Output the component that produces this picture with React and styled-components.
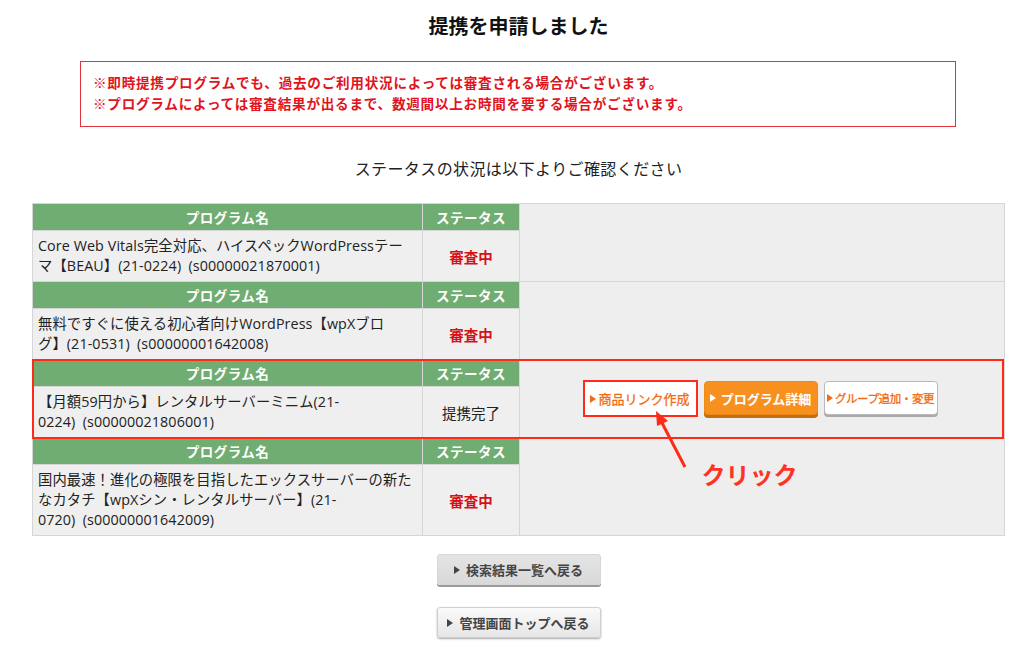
import React from "react"
import styled, { createGlobalStyle, css } from "styled-components"

const GlobalStyle = createGlobalStyle`
  body {
    margin: 0;
    background: #fff;
    font-family: "Liberation Sans", "Noto Sans CJK JP", sans-serif;
    color: #222;
  }
`

// name lines are split where the original table wraps them
const programs = [
  {
    name: ["Core Web Vitals完全対応、ハイスペックWordPressテー", "マ【BEAU】(21-0224)\u2002(s00000021870001)"],
    status: "審査中",
    pending: true,
  },
  {
    name: ["無料ですぐに使える初心者向けWordPress【wpXブロ", "グ】(21-0531)\u2002(s00000001642008)"],
    status: "審査中",
    pending: true,
  },
  {
    name: ["【月額59円から】レンタルサーバーミニム(21-", "0224)\u2002(s00000021806001)"],
    status: "提携完了",
    pending: false,
    active: true,
  },
  {
    name: [
      "国内最速！進化の極限を目指したエックスサーバーの新た",
      "なカタチ【wpXシン・レンタルサーバー】(21-",
      "0720)\u2002(s00000001642009)",
    ],
    status: "審査中",
    pending: true,
  },
]

const App = () => {
  return (
    <Page>
      <GlobalStyle />
      <Title>提携を申請しました</Title>
      <Notice>
        <p>※即時提携プログラムでも、過去のご利用状況によっては審査される場合がございます。</p>
        <p>※プログラムによっては審査結果が出るまで、数週間以上お時間を要する場合がございます。</p>
      </Notice>
      <Lead>ステータスの状況は以下よりご確認ください</Lead>

      <ProgramTable>
        {programs.map((p, i) => (
          <ProgramBlock key={i} $highlight={p.active}>
            <HeadCell>プログラム名</HeadCell>
            <HeadCell>ステータス</HeadCell>
            <ActionCell>
              {p.active && (
                <ButtonRow>
                  <LinkWrap>
                    <SmallButton $marked>商品リンク作成</SmallButton>
                    <Arrow width="40" height="62" viewBox="0 0 40 62">
                      <line x1="32" y1="59" x2="8" y2="13" stroke="#ff2a17" strokeWidth="3" />
                      <polygon points="3,3 15,13 4,18" fill="#ff2a17" />
                    </Arrow>
                    <CalloutText>クリック</CalloutText>
                  </LinkWrap>
                  <SmallButton $variant="orange">プログラム詳細</SmallButton>
                  <SmallButton $narrow>グループ追加・変更</SmallButton>
                </ButtonRow>
              )}
            </ActionCell>
            <NameCell>
              {p.name.map((line, j) => (
                <span key={j}>{line}</span>
              ))}
            </NameCell>
            <StatusCell $pending={p.pending}>{p.status}</StatusCell>
          </ProgramBlock>
        ))}
      </ProgramTable>

      <BackButtons>
        <BackButton>検索結果一覧へ戻る</BackButton>
        <BackButton $light>管理画面トップへ戻る</BackButton>
      </BackButtons>
    </Page>
  )
}

const Page = styled.div`
  width: 973px;
  margin-left: 32px;
  padding-bottom: 16px;
`

const Title = styled.h1`
  margin: 0;
  padding-top: 13px;
  text-align: center;
  font-size: 20px;
  line-height: 28px;
  font-weight: 700;
  color: #111;
`

const Notice = styled.div`
  margin: 20px 0 0 48px;
  width: 876px;
  height: 66px;
  border: 1px solid #e2333d;
  padding: 11px 12px 0;
  box-sizing: border-box;

  p {
    margin: 0;
    color: #e0141c;
    font-size: 13.6px;
    line-height: 21px;
    font-weight: 700;
    letter-spacing: 0.75px;
    white-space: nowrap;
  }
`

const Lead = styled.p`
  margin: 31px 0 0;
  text-align: center;
  font-size: 16px;
  line-height: 24px;
  letter-spacing: 0.4px;
  color: #222;
`

const ProgramTable = styled.div`
  margin-top: 21px;
  border: 1px solid #d6d6d6;
  border-bottom: none;
`

const ProgramBlock = styled.div`
  position: relative;
  display: grid;
  grid-template-columns: 390px 97px 1fr;
  grid-template-rows: 27px auto;

  ${({ $highlight }) =>
    $highlight &&
    css`
      z-index: 1;
      &::after {
        content: "";
        position: absolute;
        left: -1px;
        top: -1px;
        right: 0px;
        bottom: -1px;
        border: 2px solid #ff2a17;
        pointer-events: none;
      }
    `}
`

const HeadCell = styled.div`
  background: #6fad72;
  color: #fff;
  font-weight: 700;
  font-size: 13.5px;
  letter-spacing: 0.5px;
  display: flex;
  align-items: center;
  justify-content: center;
  border-right: 1px solid #d6d6d6;
  border-bottom: 1px solid #d6d6d6;
`

const ActionCell = styled.div`
  grid-column: 3;
  grid-row: 1 / span 2;
  background: #eeeeee;
  border-bottom: 1px solid #d6d6d6;
  display: flex;
  align-items: center;
  justify-content: center;
`

const NameCell = styled.div`
  grid-column: 1;
  grid-row: 2;
  display: flex;
  flex-direction: column;
  background: #efefef;
  padding: 5px 6px 5px 5px;
  font-family: "Open Sans", "Noto Sans CJK JP", sans-serif;
  font-size: 14.3px;
  line-height: 20px;
  letter-spacing: 0.1px;
  color: #222;
  white-space: nowrap;
  border-right: 1px solid #d6d6d6;
  border-bottom: 1px solid #d6d6d6;
`

const StatusCell = styled.div`
  grid-column: 2;
  grid-row: 2;
  background: #efefef;
  display: flex;
  align-items: center;
  justify-content: center;
  font-size: 14.5px;
  border-right: 1px solid #d6d6d6;
  border-bottom: 1px solid #d6d6d6;
  color: ${({ $pending }) => ($pending ? "#d4121a" : "#222")};
  font-weight: ${({ $pending }) => ($pending ? 700 : 400)};
`

const ButtonRow = styled.div`
  display: flex;
  gap: 6px;
  margin-left: -4px;
  margin-top: 1px;
`

const LinkWrap = styled.div`
  position: relative;
`

const SmallButton = styled.div`
  position: relative;
  box-sizing: border-box;
  width: 114px;
  height: 34px;
  border-radius: 4px;
  display: flex;
  align-items: center;
  justify-content: center;
  gap: 2px;
  font-size: ${({ $narrow }) => ($narrow ? "11.5px" : "13px")};
  letter-spacing: ${({ $narrow }) => ($narrow ? "-0.4px" : "0")};
  font-weight: 400;
  -webkit-text-stroke: 0.3px #f26b12;
  white-space: nowrap;
  background: #fff;
  color: #f26b12;
  border: 1px solid #b9b9b9;
  box-shadow: 0 2px 0 #a9a9a9;

  &::before {
    content: "";
    border-left: 6px solid currentColor;
    border-top: 4px solid transparent;
    border-bottom: 4px solid transparent;
  }

  ${({ $variant }) =>
    $variant === "orange" &&
    css`
      background: #f7901e;
      color: #fff;
      font-weight: 700;
      -webkit-text-stroke: 0;
      border-color: #f08a16;
      box-shadow: 0 3px 0 #c56f0c;
      &::before {
        margin-right: 3px;
      }
    `}

  ${({ $marked }) =>
    $marked &&
    css`
      width: 115px;
      height: 37px;
      margin-top: -1px;
      border: 2px solid #ff2a17;
      border-radius: 0;
      box-shadow: none;
    `}
`

const Arrow = styled.svg`
  position: absolute;
  left: 70px;
  top: 27px;
  pointer-events: none;
`

const CalloutText = styled.span`
  position: absolute;
  left: 119px;
  top: 80px;
  font-size: 24px;
  line-height: 30px;
  font-weight: 700;
  color: #ff3323;
  white-space: nowrap;
`

const BackButtons = styled.div`
  margin-top: 18px;
  display: flex;
  flex-direction: column;
  align-items: center;
  gap: 22px;
`

const BackButton = styled.div`
  box-sizing: border-box;
  width: 164px;
  height: 31px;
  display: flex;
  align-items: center;
  justify-content: center;
  gap: 6px;
  border-radius: 3px;
  font-size: 13px;
  font-weight: 700;
  color: #444;
  background: ${({ $light }) =>
    $light ? "linear-gradient(#fafafa, #e6e6e6)" : "linear-gradient(#e4e4e4, #d9d9d9)"};
  border: 1px solid ${({ $light }) => ($light ? "#cfcfcf" : "#d6d6d6")};
  box-shadow: ${({ $light }) => ($light ? "0 1px 2px rgba(0,0,0,0.35)" : "0 2px 0 #9a9a9a")};

  &::before {
    content: "";
    border-left: 6px solid #444;
    border-top: 4px solid transparent;
    border-bottom: 4px solid transparent;
  }
`

export default App
